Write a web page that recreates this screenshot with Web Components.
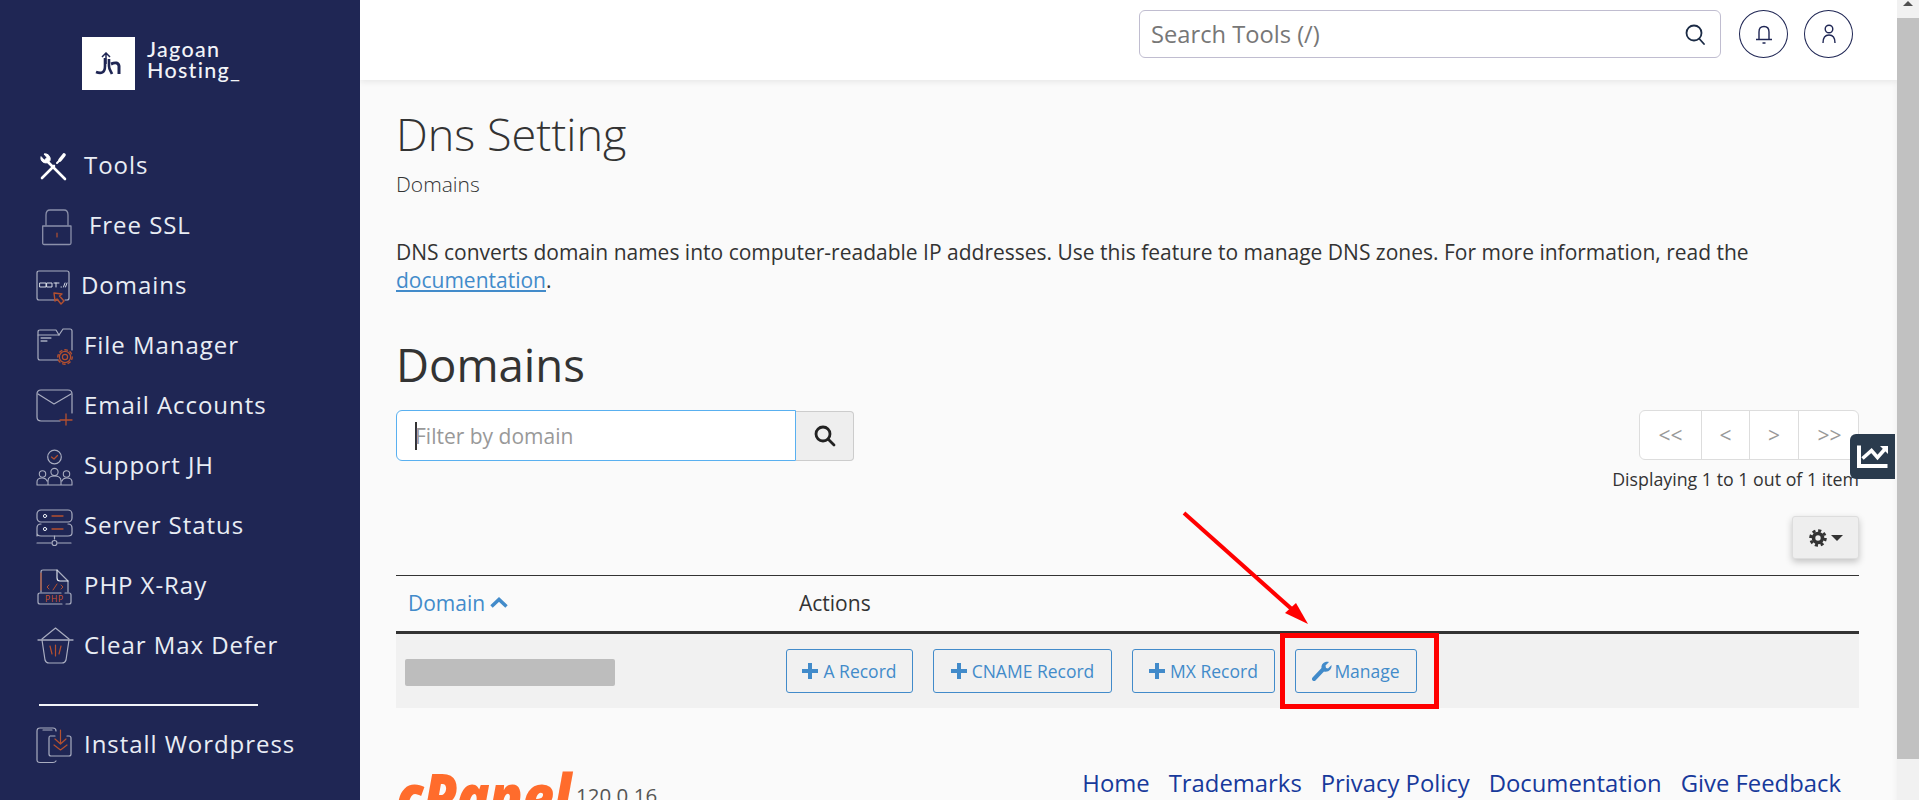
<!DOCTYPE html>
<html lang="en"><head><meta charset="utf-8"><title>Dns Setting</title>
<style>
html,body{margin:0;height:800px;overflow:hidden;background:#fafafa;font-family:"Open Sans","Noto Sans",sans-serif}
</style></head><body>
<jh-app></jh-app>
<script>
const G='#a9adc0',O='#b5502f',W='#e9edf4';
const svg=(w,h,dy,b)=>`<svg width="${w}" height="${h}" viewBox="0 ${-dy} ${w} ${h}" fill="none" stroke-linecap="round" stroke-linejoin="round" style="overflow:visible">${b}</svg>`;
const ICONS={
tools:svg(36,36,6,`<g stroke="#fff"><path d="M7 8 L25 26" stroke-width="2.6"/><path d="M1 4 C0 8 4 11 8 9.5 L10 7.5 C11 4 8 0 4 1 L7 4.5 L4.5 7 Z" fill="#fff" stroke-width="1"/><path d="M2 25 L14 13" stroke-width="2.6"/><path d="M17 10 L20 7" stroke-width="2"/><path d="M20 7 L24 2" stroke-width="3.6"/></g>`),
lock:svg(36,36,2,`<path d="M.7 17 H29 V34 Q29 35.5 27.5 35.5 H2.2 Q.7 35.5 .7 34 Z" stroke="#8b90aa" stroke-width="1.3"/><path d="M4 16 V6 Q4 1 8 1 H22 Q26 1 26 6 V16" stroke="#8b90aa" stroke-width="1.3"/><path d="M15 24 V28" stroke="${O}" stroke-width="1.2"/>`),
domain:svg(36,36,3,`<path d="M22 30 H3 Q1 30 1 28 V3 Q1 1 3 1 H31 Q33 1 33 3 V28 Q33 30 31 30 H29" stroke="${G}" stroke-width="1.2"/><path d="M4 13 H10 V17 H4 Z M11 13 H16 V17 H11 Z M18 13 H23 M20 13 V17 M25 17 H25.500 M29 13 L27.500 17 M31 13 L29.500 17" stroke="${W}" stroke-width=".9"/><path d="M18 23 L26 24 L23.5 26 L28 31 L25 34 L21 29 L19 31 Z" stroke="${O}" stroke-width="1.4"/>`),
folder:svg(37,37,1,`<path d="M21 32 H3 Q1 32 1 30 V4 Q1 2 3 2 H19 L22 7 M22 7 L26 1 H33 Q35 1 35 3 V22" stroke="${G}" stroke-width="1.2"/><path d="M1 7 H22" stroke="${G}" stroke-width="1.2"/><path d="M4 10 H14 M4 13 H10" stroke="${W}" stroke-width="1"/><circle cx="28" cy="29" r="2.6" stroke="${O}" stroke-width="1.2"/><circle cx="28" cy="29" r="5.6" stroke="${O}" stroke-width="1.2"/><circle cx="28" cy="29" r="7.2" stroke="${O}" stroke-width="1.4" stroke-dasharray="2.4 3.2"/>`),
mail:svg(37,37,2,`<path d="M24 32 H5 Q1 32 1 28 V5 Q1 1 5 1 H32 Q36 1 36 5 V24" stroke="${G}" stroke-width="1.2"/><path d="M2 5 L18 15 L35 5" stroke="${G}" stroke-width="1.2"/><path d="M30 25 V36 M24 31 H36" stroke="${O}" stroke-width="1.3"/>`),
team:svg(37,37,2,`<circle cx="18.500" cy="8" r="6.800" stroke="${G}" stroke-width="1.200"/><path d="M15.500 8 L18 10 L21.500 6.500" stroke="${O}" stroke-width="1.200"/><circle cx="6.500" cy="25" r="3.200" stroke="${G}" stroke-width="1.100"/><circle cx="18.500" cy="23" r="3.600" stroke="${G}" stroke-width="1.100"/><circle cx="30.500" cy="25" r="3.200" stroke="${G}" stroke-width="1.100"/><path d="M1 36 V33 Q1 29 6 29 Q10 29 11 32 M12 36 V32 Q12 27 18.500 27 Q25 27 25 32 V36 M26 32 Q27 29 31 29 Q36 29 36 33 V36 M1 36 H36" stroke="${G}" stroke-width="1.100"/>`),
server:svg(37,37,2,`<rect x="1" y="1" width="35" height="12" rx="4" stroke="${G}" stroke-width="1.200"/><path d="M1 27 V19 Q1 15 5 15 M32 15 Q36 15 36 19 V24 Q36 27 32 27 H5 Q1 27 1 24" stroke="${G}" stroke-width="1.200"/><circle cx="9" cy="7" r="1.600" stroke="${W}"/><circle cx="9" cy="20" r="1.600" stroke="${W}"/><path d="M16 7 H27 M16 20 H27" stroke="${O}" stroke-width="1.300"/><path d="M18.500 27 V30 M1 34 H15 M22 34 H35" stroke="${G}" stroke-width="1.200"/><circle cx="18.500" cy="34" r="2.500" stroke="${G}" stroke-width="1.200"/>`),
php:svg(36,37,2,`<path d="M4 23 V3 Q4 1 6 1 H20 L31 12 V23" stroke="${G}" stroke-width="1.200"/><path d="M20 1 V9 Q20 12 23 12 H31" stroke="${W}" stroke-width="1.100"/><path d="M4 4 V21" stroke="${O}" stroke-width="1.100"/><path d="M12 16 L10 18 L12 20 M24 16 L26 18 L24 20 M16 21 L20 15" stroke="${O}" stroke-width="1"/><path d="M24 24 H3 Q1 24 1 26 V33 Q1 35 3 35 H25 M29 35 H32 Q34 35 34 33 V26 Q34 24 32 24 H28" stroke="${G}" stroke-width="1.200"/><text x="8" y="33" font-family="Open Sans,sans-serif" font-size="8.500" letter-spacing=".8" fill="#d0562a" stroke="none">PHP</text>`),
bin:svg(37,38,1,`<path d="M1 13 H36" stroke="${G}" stroke-width="1.300"/><path d="M5 12 L18.500 1 L32 12" stroke="${G}" stroke-width="1.200"/><path d="M5 13 L8 33 Q9 36 12 36 H25 Q28 36 29 33 L32 13" stroke="${G}" stroke-width="1.200"/><path d="M13 19 L15 27 M18.500 18 V29 M24 19 L22 27" stroke="${O}" stroke-width="1.200"/>`),
install:svg(37,37,1,`<path d="M12 35.500 H4 Q1 35.500 1 33 V4 Q1 1 4 1 H17 Q20 1 20 4 M20 34 Q19 35.500 17 35.500 H12 M7 3 H16" stroke="${G}" stroke-width="1.200"/><path d="M14 9 H19 M14 9 Q13 9 13 11 V27 Q13 29 15 29 H33 Q35 29 35 27 V11 Q35 9 33 9 H31" stroke="${G}" stroke-width="1.200"/><path d="M24.500 3 V16 M19 12 L24.500 17 L30 12 M18 18 L24.500 23 L31 18" stroke="${O}" stroke-width="1.200"/>`)
};
const def=(name,html)=>{customElements.define(name,class extends HTMLElement{
  connectedCallback(){if(this.shadowRoot)return;const r=this.attachShadow({mode:'open'});r.innerHTML=typeof html==='function'?html(this):html;}
});};

def('jh-nav-item',e=>`<style>:host{display:flex;align-items:center;height:60px;padding-left:${e.getAttribute('x')||36}px;color:${W};font-size:24px;letter-spacing:.95px;line-height:1}
.i{display:flex;align-items:center;width:${e.getAttribute('w')||48}px;flex:none}svg{display:block}</style><span class="i">${ICONS[e.getAttribute('icon')]}</span><slot></slot>`);

def('jh-sidebar',`<style>:host{display:block;width:360px;flex:none;height:800px;background:#1f2654;color:#fff}
.brand{display:flex;align-items:center;gap:12px;padding:37px 0 0 82px;height:53px;margin-bottom:45px}
.sq{width:53px;height:53px;background:#fff;display:flex;align-items:center;justify-content:center;flex:none}
.tx{font:500 21.500px/21px Lato,"Open Sans",sans-serif;letter-spacing:1.300px;color:#f2f4f8;white-space:pre;margin-top:-7px}
.rule{height:2px;background:#f1f3f8;width:219px;margin:29px 0 8px 39px}</style>
<div class="brand"><div class="sq"><svg width="27" height="24" viewBox="0 0 27 24" fill="none" stroke="#1f2654"><path d="M1 20 C6 22 10 21 10 14 V6" stroke-width="2.600"/><path d="M7 5 L11 1 L15 5 M11 2 V12" stroke-width="1.500"/><path d="M14 7 V14 C14 18 16 19 17 22" stroke-width="2.600"/><path d="M16 12 Q23 9 24 14 V22" stroke-width="3"/></svg></div><div class="tx">Jagoan
Hosting_</div></div>
<jh-nav-item icon="tools" w="44" x="40">Tools</jh-nav-item>
<jh-nav-item icon="lock" w="47" x="42">Free SSL</jh-nav-item>
<jh-nav-item icon="domain" w="45" x="36">Domains</jh-nav-item>
<jh-nav-item icon="folder" w="47" x="37">File Manager</jh-nav-item>
<jh-nav-item icon="mail" w="48" x="36">Email Accounts</jh-nav-item>
<jh-nav-item icon="team" w="48" x="36">Support JH</jh-nav-item>
<jh-nav-item icon="server" w="48" x="36">Server Status</jh-nav-item>
<jh-nav-item icon="php" w="47" x="37">PHP X-Ray</jh-nav-item>
<jh-nav-item icon="bin" w="47" x="37">Clear Max Defer</jh-nav-item>
<div class="rule"></div>
<jh-nav-item icon="install" w="48" x="36">Install Wordpress</jh-nav-item>`);

def('jh-topbar',`<style>:host{display:flex;align-items:flex-start;height:80px;box-sizing:border-box;padding:10px 44px 0 0;justify-content:flex-end;background:#fff;box-shadow:0 2px 6px rgba(0,0,0,.08);position:relative;z-index:1}
.s{display:flex;align-items:center;box-sizing:border-box;width:582px;height:48px;border:1px solid #c0bdd0;border-radius:6px;padding:0 14px 0 11px;font-size:23.700px;color:#777;justify-content:space-between;background:#fff;margin-right:18px}
.c{width:49px;height:48px;box-sizing:border-box;border:1px solid #1f2654;border-radius:50%;display:flex;align-items:center;justify-content:center;flex:none}
.c+.c{margin-left:16px}</style>
<div class="s"><span>Search Tools (/)</span><svg width="22" height="22" viewBox="0 0 22 22" fill="none" stroke="#1b2b45" stroke-width="1.800"><circle cx="10" cy="10" r="7.500"/><path d="M15.500 16 L20 21" stroke-linecap="round"/></svg></div>
<div class="c"><svg width="18" height="19" viewBox="0 0 18 19" fill="none" stroke="#1f2654" stroke-width="1.400"><path d="M4 14 V7 Q4 1.500 9 1.500 Q14 1.500 14 7 V14 M1 14.500 H17 M7.500 18 H10.500"/></svg></div>
<div class="c"><svg width="16" height="20" viewBox="0 0 16 20" fill="none" stroke="#1f2654" stroke-width="1.400"><circle cx="8" cy="5" r="3.800"/><path d="M2 19 Q2 11 8 11 Q14 11 14 19"/></svg></div>`);

def('jh-filter',`<style>:host{display:flex;align-items:flex-start}
.i{width:400px;height:51px;box-sizing:border-box;border:1px solid #59b0f0;border-radius:6px 0 0 6px;background:#fff;padding-left:18px;display:flex;align-items:center;font-size:21px;color:#999}
.caret{width:2px;height:28px;background:#333;margin-right:-2px}
.b{width:58px;height:50px;box-sizing:border-box;margin-top:1px;background:#eee;border:1px solid #ccc;border-left:0;border-radius:0 4px 4px 0;display:flex;align-items:center;justify-content:center}</style>
<div class="i"><span class="caret"></span><span>Filter by domain</span></div>
<div class="b"><svg width="22" height="22" viewBox="0 0 22 22" fill="none" stroke="#222" stroke-width="2.800" stroke-linecap="round"><circle cx="9" cy="9" r="7"/><path d="M14.500 14.500 L20 20"/></svg></div>`);

def('jh-pager',`<style>:host{display:block;text-align:right;color:#333}
.p{display:grid;grid-template-columns:61px 48px 49px 62px;width:220px;height:50px;box-sizing:border-box;margin-left:auto;border:1px solid #ddd;border-radius:6px;background:#fff;color:#999;font-size:21px}
.p span{display:flex;align-items:center;justify-content:center;border-left:1px solid #ddd}.p span:first-child{border:0}
.t{font-size:17.800px;line-height:24px;margin-top:7px;white-space:nowrap}</style>
<div class="p"><span>&lt;&lt;</span><span>&lt;</span><span>&gt;</span><span>&gt;&gt;</span></div><div class="t">Displaying 1 to 1 out of 1 item</div>`);

def('jh-gear',`<style>:host{display:flex;align-items:center;justify-content:center;gap:4px;width:67px;height:43px;box-sizing:border-box;margin-left:auto;background:#eee;border:1px solid #ddd;border-radius:3px;box-shadow:0 3px 7px rgba(0,0,0,.22)}</style>
<svg width="18" height="18" viewBox="0 0 18 18" fill="none" stroke="#333"><circle cx="9" cy="9" r="4.500" stroke-width="3.600"/><circle cx="9" cy="9" r="7.400" stroke-width="2.800" stroke-dasharray="3.100 2.700"/></svg><svg width="12" height="6" viewBox="0 0 12 6"><path d="M0 0 H12 L6 6 Z" fill="#333"/></svg>`);

def('jh-btn',e=>`<style>:host{display:inline-flex;align-items:center;justify-content:center;gap:${e.getAttribute('icon')?2:5}px;height:44px;box-sizing:border-box;border:1px solid #428bca;border-radius:3px;color:#428bca;font-size:17.500px;white-space:nowrap;width:${e.getAttribute('w')}px}svg{display:block}</style>${e.getAttribute('icon')==='wrench'?
`<svg width="20" height="20" viewBox="0 0 20 20"><path d="M2 18 L11 8.500" stroke="#428bca" stroke-width="4" stroke-linecap="round"/><path d="M9.500 7 C9 2.500 13 0 17 1 L13.500 4.500 L14 7 L16 7.500 L19.500 4 C20 8.500 16.500 11.500 12 10.500 Z" fill="#428bca"/></svg>`:
`<svg width="16" height="16" viewBox="0 0 16 16"><path d="M6 0 H10 V6 H16 V10 H10 V16 H6 V10 H0 V6 H6 Z" fill="#428bca"/></svg>`}<slot></slot>`);

def('jh-table',`<style>:host{display:block;border-top:1px solid #333;margin-top:16px}
.h{height:55px;box-sizing:content-box;border-bottom:3px solid #333;display:flex;align-items:center;font-size:21px;color:#333;padding-bottom:0}
.d,.ac{margin-top:-2px}
.d{width:403px;padding-left:12px;box-sizing:border-box;color:#428bca;display:flex;align-items:center;gap:5px}
.r{height:74px;background:#f1f1f1;display:flex;align-items:center;box-sizing:border-box}
.blur{width:210px;height:27px;background:#bdbdbd;border-radius:2px;margin:3px 171px 0 9px;flex:none}
.a{display:flex;gap:20px}</style>
<div class="h"><div class="d">Domain <svg width="18" height="11" viewBox="0 0 18 11" fill="none" stroke="#428bca" stroke-width="3.500"><path d="M1.500 9.500 L9 2.500 L16.500 9.500"/></svg></div><div class="ac">Actions</div></div>
<div class="r"><div class="blur"></div><div class="a"><jh-btn w="127">A Record</jh-btn><jh-btn w="179">CNAME Record</jh-btn><jh-btn w="143">MX Record</jh-btn><jh-btn w="122" icon="wrench">Manage</jh-btn></div></div>`);

def('jh-footer',`<style>:host{display:flex;justify-content:space-between;margin-top:60px;height:40px;padding-right:18px}
.l{display:flex;align-items:flex-start}
.logo{font:italic 800 64px/1 "Open Sans",sans-serif;color:#ff6c2c;letter-spacing:-1px;width:180px;white-space:nowrap;margin-top:-4px;transform:scaleX(.86);transform-origin:left top}
.v{font-size:20.500px;line-height:30px;color:#555;margin-top:12px}
.n{display:flex;gap:19px;font-size:23.850px;color:#17399b;line-height:30px}</style>
<div class="l"><div class="logo">cPanel</div><div class="v">120.0.16</div></div>
<div class="n"><span>Home</span><span>Trademarks</span><span>Privacy Policy</span><span>Documentation</span><span>Give Feedback</span></div>`);

def('jh-scrollbar',`<style>:host{display:flex;flex-direction:column;width:22px;flex:none;height:800px;background:#f1f1f1;align-items:center}
.u{width:0;height:0;border:5px solid transparent;border-top:0;border-bottom:5px solid #505050;margin:1px 0 12px}
.t{width:100%;height:741px;background:#c1c1c1}</style><div class="u"></div><div class="t"></div>`);

def('jh-main',`<style>:host{display:block;flex:1;min-width:0;height:800px;background:#fafafa;color:#333;overflow:hidden;position:relative;box-shadow:inset -6px 0 6px -6px rgba(0,0,0,.06)}
.c{padding:0 38px 0 36px}
h1{font-weight:300;font-size:45px;line-height:60px;margin:24px 0 0}
.sub{font-weight:300;font-size:21px;line-height:30px;margin-top:5px}
p{font-size:21px;line-height:28px;margin:39px 0 0}
a{color:#428bca;text-decoration:underline}
h2{font-weight:500;font-size:45.500px;line-height:50px;margin:45px 0 0}
.bar{display:flex;justify-content:space-between;margin-top:21px}
jh-gear{margin-top:25px}
.badge{position:absolute;left:1490px;top:434px;width:45px;height:45px;background:#2a3b4d;border-radius:6px 0 0 6px;display:flex;align-items:center;justify-content:center}
.ann{position:absolute;left:0;top:0;pointer-events:none}</style>
<jh-topbar></jh-topbar>
<div class="c"><h1>Dns Setting</h1><div class="sub">Domains</div>
<p>DNS converts domain names into computer-readable IP addresses. Use this feature to manage DNS zones. For more information, read the <a>documentation</a>.</p>
<h2>Domains</h2>
<div class="bar"><jh-filter></jh-filter><jh-pager></jh-pager></div>
<jh-gear></jh-gear><jh-table></jh-table><jh-footer></jh-footer></div>
<div class="badge"><svg width="32" height="26" viewBox="0 0 32 26" fill="none" stroke="#fff"><path d="M2 1.500 V22 H30.500" stroke-width="4"/><path d="M5.500 14.500 L14.500 6.500 L20.500 13.500 L28 5" stroke-width="3.600"/><path d="M23 2 H31 V10 Z" fill="#fff" stroke="none"/></svg></div>
<svg class="ann" width="1537" height="800" fill="none"><rect x="922.500" y="635.500" width="154" height="71" stroke="#f00" stroke-width="5"/><path d="M824 513 L935 612" stroke="#f00" stroke-width="4"/><path d="M948 624 L925 613 L936 603 Z" fill="#f00"/></svg>`);

def('jh-app',`<style>:host{display:flex;width:1919px;height:800px;overflow:hidden}</style><jh-sidebar></jh-sidebar><jh-main></jh-main><jh-scrollbar></jh-scrollbar>`);
</script>
</body></html>
